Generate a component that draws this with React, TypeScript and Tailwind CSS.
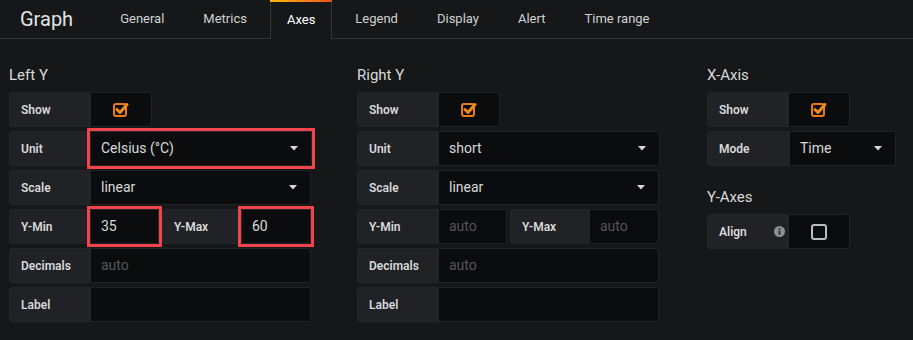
import React from "react";

const font = { fontFamily: "Roboto, 'Liberation Sans', sans-serif" };

function Checked() {
  return (
    <svg width="20" height="20" viewBox="0 0 20 20">
      <rect x="3" y="4" width="12" height="12" rx="2" fill="none" stroke="#eb7b18" strokeWidth="2" />
      <path d="M6 9.5 L9 12.5 L16 4.5" fill="none" stroke="#f18a1c" strokeWidth="3" strokeLinecap="round" strokeLinejoin="round" />
    </svg>
  );
}

function Unchecked() {
  return <div className="w-4 h-4 rounded-[3px] border-2 border-[#b8bcc4]" />;
}

function Caret() {
  return (
    <svg width="8" height="5" viewBox="0 0 8 5" className="ml-auto mr-[3px]">
      <path d="M0 0 L8 0 L4 4.5 Z" fill="#d8d9da" />
    </svg>
  );
}

function Label({ children, w = "w-[81px]" }: { children: React.ReactNode; w?: string }) {
  return (
    <div className={`${w} h-[35px] shrink-0 flex items-center pl-[11px] bg-[#212226] border border-[#25262a] rounded-l-[3px] text-[12px] font-semibold text-[#d8d9da]`}>
      {children}
    </div>
  );
}

function Field({
  children,
  w,
  red,
  placeholder,
}: {
  children?: React.ReactNode;
  w: string;
  red?: boolean;
  placeholder?: boolean;
}) {
  return (
    <div
      className={`${w} h-[35px] shrink-0 flex items-center px-[10px] bg-[#0b0c0e] border border-[#222327] text-[14px] ${
        placeholder ? "text-[#555659]" : "text-[#d8d9da]"
      } ${red ? "outline outline-[3px] outline-[#f2444a] rounded-none" : "rounded-r-[3px]"}`}
    >
      {children}
    </div>
  );
}

function CheckField({ checked }: { checked: boolean }) {
  return (
    <div className="w-[62px] h-[35px] shrink-0 flex items-center justify-center bg-[#0b0c0e] border border-[#222327] rounded-r-[3px]">
      {checked ? <Checked /> : <Unchecked />}
    </div>
  );
}

function Row({ children }: { children: React.ReactNode }) {
  return <div className="flex">{children}</div>;
}

function Heading({ children, className = "" }: { children: React.ReactNode; className?: string }) {
  return <div className={`text-[15px] leading-[20px] text-[#d8d9da] mb-[7px] ${className}`}>{children}</div>;
}

function YColumn({
  title,
  unit,
  redUnit,
  min,
  max,
  red,
}: {
  title: string;
  unit: string;
  redUnit?: boolean;
  min?: string;
  max?: string;
  red?: boolean;
}) {
  return (
    <div className="w-[302px] shrink-0">
      <Heading>{title}</Heading>
      <div className="flex flex-col gap-[4px]">
        <Row>
          <Label>Show</Label>
          <CheckField checked />
        </Row>
        <Row>
          <Label>Unit</Label>
          <Field w="w-[222px]" red={redUnit}>
            <span>{unit}</span>
            <Caret />
          </Field>
        </Row>
        <Row>
          <Label>Scale</Label>
          <Field w="w-[221px]">
            <span>linear</span>
            <Caret />
          </Field>
        </Row>
        <Row>
          <Label>Y-Min</Label>
          <Field w="w-[69px]" red={red} placeholder={!min}>
            {min ?? "auto"}
          </Field>
          <div className="w-[3px] shrink-0" />
          <Label w="w-[79px]">Y-Max</Label>
          <Field w="w-[70px]" red={red} placeholder={!max}>
            {max ?? "auto"}
          </Field>
        </Row>
        <Row>
          <Label>Decimals</Label>
          <Field w="w-[221px]" placeholder>
            auto
          </Field>
        </Row>
        <Row>
          <Label>Label</Label>
          <Field w="w-[221px]" />
        </Row>
      </div>
    </div>
  );
}

export default function App() {
  const tabs = ["General", "Metrics", "Axes", "Legend", "Display", "Alert", "Time range"];
  return (
    <div className="w-[913px] h-[340px] bg-[#161719] overflow-hidden" style={font}>
      <div className="h-[39px] flex items-stretch border-b border-[#333437] bg-[#161719]">
        <div className="pl-[20px] pr-[31px] flex items-center text-[20px] text-[#e3e4e5]">Graph</div>
        <div className="flex gap-[7px] items-stretch">
          {tabs.map((t) =>
            t === "Axes" ? (
              <div
                key={t}
                className="relative px-4 flex items-center text-[13px] text-white bg-[#161719] border-x border-[#333437] -mb-px"
              >
                <div className="absolute left-[-1px] right-[-1px] top-0 h-[2px] bg-gradient-to-r from-[#fbb80e] to-[#ee4e1b]" />
                {t}
              </div>
            ) : (
              <div key={t} className="px-4 flex items-center text-[13px] text-[#d0d1d3]">
                {t}
              </div>
            )
          )}
        </div>
      </div>
      <div className="flex pl-[9px] pt-[26px]">
        <YColumn title="Left Y" unit="Celsius (°C)" redUnit min="35" max="60" red />
        <div className="w-[46px] shrink-0" />
        <YColumn title="Right Y" unit="short" />
        <div className="w-[48px] shrink-0" />
        <div className="w-[190px] shrink-0">
          <Heading>X-Axis</Heading>
          <div className="flex flex-col gap-[4px]">
            <Row>
              <Label>Show</Label>
              <CheckField checked />
            </Row>
            <Row>
              <Label w="w-[82px]">Mode</Label>
              <Field w="w-[107px]">
                <span>Time</span>
                <Caret />
              </Field>
            </Row>
          </div>
          <Heading className="mt-[21px]">Y-Axes</Heading>
          <Row>
            <Label>
              <span>Align</span>
              <svg width="11" height="11" viewBox="0 0 12 12" className="ml-[27px]">
                <circle cx="6" cy="6" r="6" fill="#8e8f92" />
                <rect x="5.1" y="5" width="1.8" height="4.5" fill="#212226" />
                <circle cx="6" cy="3.2" r="1" fill="#212226" />
              </svg>
            </Label>
            <CheckField checked={false} />
          </Row>
        </div>
      </div>
    </div>
  );
}
